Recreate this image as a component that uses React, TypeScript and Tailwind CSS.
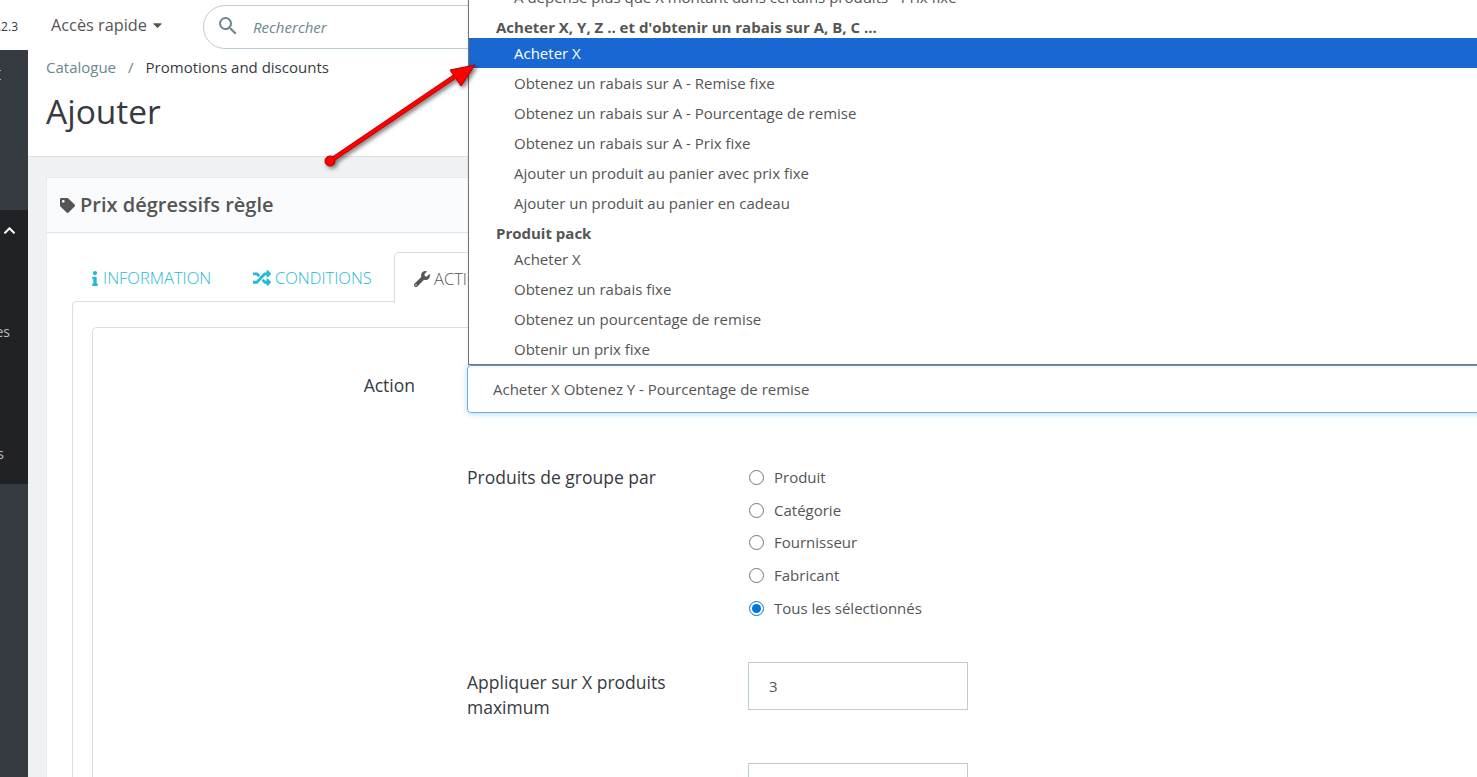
import { FaCaretDown, FaChevronUp, FaInfo, FaRandom, FaTag, FaWrench } from 'react-icons/fa'
import { MdSearch } from 'react-icons/md'

const optionsTop = [
  { type: 'item', label: 'A dépensé plus que X montant dans certains produits - Prix fixe' },
  { type: 'group', label: "Acheter X, Y, Z .. et d'obtenir un rabais sur A, B, C ..." },
  { type: 'selected', label: 'Acheter X' },
  { type: 'item', label: 'Obtenez un rabais sur A - Remise fixe' },
  { type: 'item', label: 'Obtenez un rabais sur A - Pourcentage de remise' },
  { type: 'item', label: 'Obtenez un rabais sur A - Prix fixe' },
  { type: 'item', label: 'Ajouter un produit au panier avec prix fixe' },
  { type: 'item', label: 'Ajouter un produit au panier en cadeau' },
  { type: 'group', label: 'Produit pack' },
  { type: 'item', label: 'Acheter X' },
  { type: 'item', label: 'Obtenez un rabais fixe' },
  { type: 'item', label: 'Obtenez un pourcentage de remise' },
  { type: 'item', label: 'Obtenir un prix fixe' },
]

const groupBy = ['Produit', 'Catégorie', 'Fournisseur', 'Fabricant', 'Tous les sélectionnés']

function Sidebar() {
  return (
    <aside className="w-[28px] shrink-0 flex flex-col overflow-hidden text-sm">
      <div className="h-[50px] bg-white flex items-center justify-end pr-[10px] pt-[4px] text-xs text-[#363a41] whitespace-nowrap">
        1.7.2.3
      </div>
      <div className="h-[160px] bg-[#363a41] pt-[20px]">
        <div className="w-px h-[10px] border-y border-[#f39d72]" />
      </div>
      <div className="h-[274px] bg-[#202226] text-[#bebebe] relative">
        <div className="h-[40px] flex items-center pl-[3px] text-white">
          <FaChevronUp className="h-[13px] w-[13px]" />
        </div>
        <div className="flex justify-end pr-[18px] mt-[72px] whitespace-nowrap">Préférences</div>
        <div className="flex justify-end pr-[24px] mt-[102px] whitespace-nowrap">Modules</div>
      </div>
      <div className="flex-1 bg-[#363a41]" />
    </aside>
  )
}

function Dropdown() {
  return (
    <div className="absolute z-20 left-[468px] top-[-19px] w-[1100px] bg-white border border-[#767676] text-[15px] text-[#555] shadow-[0_1px_2px_rgba(0,0,0,0.15)]">
      {optionsTop.map((o, i) => {
        if (o.type === 'group') {
          return (
            <div key={i} className="h-[26px] flex items-end pl-[27px] font-bold">
              {o.label}
            </div>
          )
        }
        return (
          <div
            key={i}
            className={
              o.type === 'selected'
                ? 'h-[30px] flex items-center pl-[45px] bg-[#1967d2] text-white'
                : 'h-[30px] flex items-center pl-[45px]'
            }
          >
            {o.label}
          </div>
        )
      })}
    </div>
  )
}

function Arrow() {
  return (
    <svg
      className="absolute z-30 left-[320px] top-[55px] w-[165px] h-[115px] drop-shadow-[2px_2px_2px_rgba(0,0,0,0.55)]"
      viewBox="320 55 165 115"
    >
      <line x1="330" y1="161" x2="457" y2="75" stroke="#b00000" strokeWidth="5" />
      <line x1="330" y1="161" x2="457" y2="75" stroke="#ff0000" strokeWidth="3.4" />
      <polygon points="475,65 450,70 461,86" fill="#ff0000" stroke="#b00000" strokeWidth="1" />
      <circle cx="330" cy="161" r="5" fill="#ff0000" stroke="#b00000" strokeWidth="1" />
    </svg>
  )
}

export default function App() {
  return (
    <div
      className="relative h-[777px] flex overflow-hidden bg-white text-[#363a41]"
      style={{ fontFamily: '"Open Sans", sans-serif' }}
    >
      <Sidebar />
      <main className="flex-1 min-w-0 flex flex-col">
        <header className="h-[50px] shrink-0 flex items-center pl-[23px]">
          <button className="flex items-center w-[152px] text-[16.3px] text-[#555]">
            Accès rapide
            <FaCaretDown className="ml-[5px] h-[14px] w-[11px]" />
          </button>
          <div className="w-[420px] h-[44px] mt-[4px] rounded-[22px] border border-[#bbcdd2] flex items-center pl-[12px]">
            <MdSearch className="h-[24px] w-[24px] text-[#6c868e] -mt-[3px]" />
            <span className="ml-[13px] text-[15px] italic text-[#6c868e]">Rechercher</span>
          </div>
        </header>

        <div className="h-[107px] shrink-0 border-b border-[#dfdfdf] pl-[18px] pt-[6px]">
          <nav className="flex items-center text-[15px]">
            <span className="text-[#6c868e]">Catalogue</span>
            <span className="mx-[12px] text-[#5f8a6b]">/</span>
            <span>Promotions and discounts</span>
          </nav>
          <h1 className="mt-[9px] text-[33.5px] leading-[46px]">Ajouter</h1>
        </div>

        <div className="flex-1 bg-[#eff1f2] pl-[18px] pt-[20px] overflow-hidden">
          <section className="w-[1500px] h-[700px] bg-white border border-[#e3ecee]">
            <h2 className="h-[55px] bg-[#fafbfc] border-b border-[#dbe6e9] flex items-center pl-[13px] text-[20px] font-semibold text-[#555]">
              <FaTag className="h-[15px] w-[15px] mr-[5px]" />
              Prix dégressifs règle
            </h2>

            <div className="pl-[25px] pt-[19px]">
              <div className="flex h-[50px] text-[16.5px] font-light text-[#25b9d7]">
                <div className="w-[159px] flex items-center pl-[19px] pt-[2px]">
                  <FaInfo className="h-[15px] w-[8px] mr-[4px]" />
                  INFORMATION
                </div>
                <div className="w-[163px] flex items-center pl-[22px] pt-[2px]">
                  <FaRandom className="h-[18px] w-[18px] mr-[4px]" />
                  CONDITIONS
                </div>
                <div className="flex items-center pl-[19px] pt-[2px] w-[200px] border border-b-0 border-[#ddd] rounded-t-[5px] text-[#555] bg-white z-10 -mb-px">
                  <FaWrench className="h-[16px] w-[16px] mr-[4px]" />
                  ACTIONS
                </div>
              </div>

              <div className="border-t border-l border-[#ddd] rounded-tl-[5px] pl-[19px] pt-[25px] h-[600px] -mt-px">
                <div className="border-t border-l border-[#ddd] rounded-tl-[5px] pt-[37px] h-[560px]">
                  <div className="flex">
                    <label className="w-[322px] shrink-0 text-right text-[17.5px] leading-[40px]">Action</label>
                    <div className="ml-[52px] w-[1100px] shrink-0 h-[48px] rounded-[4px] border border-[#66afe9] shadow-[0_1px_6px_rgba(102,175,233,0.45)] flex items-center pl-[25px] text-[15px] text-[#555]">
                      Acheter X Obtenez Y - Pourcentage de remise
                    </div>
                  </div>

                  <div className="ml-[374px] mt-[52px] flex">
                    <label className="w-[281px] text-[17.5px] leading-[25px]">Produits de groupe par</label>
                    <div className="flex flex-col -mt-[4px]">
                      {groupBy.map((g, i) => (
                        <label key={g} className="h-[32.7px] flex items-center text-[15px] text-[#555]">
                          <input
                            type="radio"
                            name="group"
                            defaultChecked={i === groupBy.length - 1}
                            className="h-[15px] w-[15px] ml-[1px] mr-[10px] accent-[#0075db]"
                          />
                          {g}
                        </label>
                      ))}
                    </div>
                  </div>

                  <div className="ml-[374px] mt-[38px] flex">
                    <label className="w-[281px] pr-[30px] pt-[8px] text-[17.5px] leading-[25px]">
                      Appliquer sur X produits maximum
                    </label>
                    <div className="w-[220px] h-[48px] border border-[#bbcdd2] flex items-center pl-[20px] text-[15px] text-[#555]">3</div>
                  </div>

                  <div className="ml-[374px] mt-[43px] flex">
                    <label className="w-[281px] pt-[12px] text-[17.5px] leading-[25px]">Nombre de produits</label>
                    <div className="w-[220px] h-[48px] border border-[#bbcdd2]" />
                  </div>
                </div>
              </div>
            </div>
          </section>
        </div>
      </main>

      <Dropdown />
      <Arrow />
    </div>
  )
}
